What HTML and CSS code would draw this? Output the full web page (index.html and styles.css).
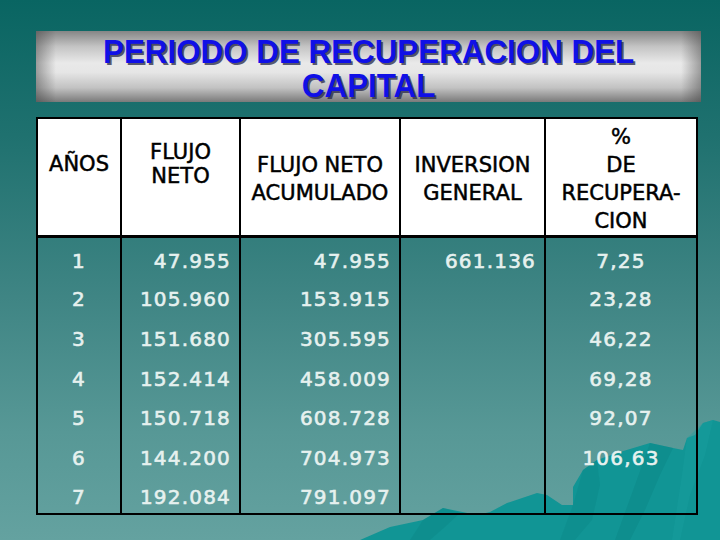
FILE: index.html
```html
<!DOCTYPE html>
<html lang="es">
<head>
<meta charset="utf-8">
<title>Periodo de recuperación del capital</title>
<link rel="stylesheet" href="styles.css">
</head>
<body>
<div class="slide">
  <svg class="hills" viewBox="0 0 360 125" width="360" height="125" aria-hidden="true">
    <polygon fill="#119595" points="0,125 30,112 63,105 83,93 117,100 130,97 147,88 177,78 187,80 202,90 213,90 213,72 223,55 237,45 260,37 290,28 313,33 323,35 327,23 335,20 343,8 353,5 360,7 360,125"/>
    <polygon fill="#0d8a8a" opacity="0.55" points="213,90 223,55 237,45 240,70 232,105 215,125 200,125"/>
    <polygon fill="#0b8585" opacity="0.45" points="290,28 313,33 300,60 285,95 270,125 255,125 275,70"/>
    <polygon fill="#1aa0a0" opacity="0.4" points="327,23 343,8 353,5 345,40 330,80 320,125 312,125 322,60"/>
    <polygon fill="#0b8585" opacity="0.4" points="63,105 83,93 100,98 85,112 70,125 50,125"/>
  </svg>

  <div class="title-band">
    <h1 class="title">PERIODO DE RECUPERACION DEL<br>CAPITAL</h1>
  </div>

  <table class="grid">
    <colgroup>
      <col class="c1"><col class="c2"><col class="c3"><col class="c4"><col class="c5">
    </colgroup>
    <thead>
      <tr>
        <th class="raised">AÑOS</th>
        <th class="raised tight">FLUJO<br>NETO</th>
        <th>FLUJO NETO<br>ACUMULADO</th>
        <th>INVERSION<br>GENERAL</th>
        <th>%<br>DE<br>RECUPERA-<br>CION</th>
      </tr>
    </thead>
    <tbody>
      <tr><td class="ctr">1</td><td>47.955</td><td>47.955</td><td>661.136</td><td class="ctr">7,25</td></tr>
      <tr><td class="ctr">2</td><td>105.960</td><td>153.915</td><td></td><td class="ctr">23,28</td></tr>
      <tr><td class="ctr">3</td><td>151.680</td><td>305.595</td><td></td><td class="ctr">46,22</td></tr>
      <tr><td class="ctr">4</td><td>152.414</td><td>458.009</td><td></td><td class="ctr">69,28</td></tr>
      <tr><td class="ctr">5</td><td>150.718</td><td>608.728</td><td></td><td class="ctr">92,07</td></tr>
      <tr><td class="ctr">6</td><td>144.200</td><td>704.973</td><td></td><td class="ctr">106,63</td></tr>
      <tr><td class="ctr">7</td><td>192.084</td><td>791.097</td><td></td><td class="ctr"></td></tr>
    </tbody>
  </table>
</div>
</body>
</html>
```

FILE: styles.css
```css
html, body {
  margin: 0;
  padding: 0;
}

body {
  width: 720px;
  height: 540px;
  overflow: hidden;
  background: linear-gradient(180deg, #096562 0%, #1f716f 25%, #3f8584 55%, #579896 80%, #64a2a0 100%);
}

.slide {
  position: relative;
  width: 720px;
  height: 540px;
  overflow: hidden;
  padding-top: 31px;
  box-sizing: border-box;
}

.hills {
  position: absolute;
  right: 0;
  bottom: 0;
  display: block;
}

.title-band {
  margin-left: 36px;
  width: 665px;
  height: 71px;
  box-sizing: border-box;
  padding-top: 4px;
  background:
    linear-gradient(90deg, rgba(60,60,60,0.45) 0%, rgba(60,60,60,0) 3%, rgba(60,60,60,0) 97%, rgba(60,60,60,0.45) 100%),
    linear-gradient(180deg, #868686 0%, #c4c4c4 22%, #e9e9e9 45%, #e6e6e6 58%, #c2c2c2 80%, #7a7a7a 100%);
  display: flex;
  align-items: center;
  justify-content: center;
}

.title {
  margin: 0;
  font-family: "Liberation Sans", Arial, sans-serif;
  font-weight: bold;
  font-size: 33px;
  line-height: 34px;
  text-align: center;
  color: #1010e6;
  text-shadow: 2px 2px 0 rgba(40, 40, 70, 0.75);
  transform: scaleX(0.95);
  white-space: nowrap;
}

.grid {
  position: relative;
  margin: 15px 0 0 36px;
  width: 660px;
  table-layout: fixed;
  border-collapse: collapse;
  border: 2px solid #000;
  font-family: "DejaVu Sans", Verdana, sans-serif;
}

.c1 { width: 84px; }
.c2 { width: 119px; }
.c3 { width: 160px; }
.c4 { width: 145px; }
.c5 { width: 152px; }

.grid th {
  background: #fff;
  color: #000;
  font-weight: normal;
  font-size: 21px;
  line-height: 28px;
  height: 118px;
  padding: 4px 0 0;
  box-sizing: border-box;
  vertical-align: middle;
  text-align: center;
  border-left: 2px solid #000;
  border-right: 2px solid #000;
  border-bottom: 3px solid #000;
  -webkit-text-stroke: 0.5px #000;
}

.grid th.raised {
  padding: 0 0 26px;
}

.grid th.tight {
  line-height: 24px;
}

.grid td {
  height: 39.6px;
  box-sizing: border-box;
  padding: 7px 8px 0 0;
  font-size: 20px;
  font-weight: normal;
  letter-spacing: 1.2px;
  line-height: 24px;
  color: #e6f1ef;
  -webkit-text-stroke: 0.6px #e6f1ef;
  text-align: right;
  vertical-align: middle;
  border-left: 2px solid #000;
  border-right: 2px solid #000;
  white-space: nowrap;
}

.grid td.ctr {
  text-align: center;
  padding-right: 0;
}
```
